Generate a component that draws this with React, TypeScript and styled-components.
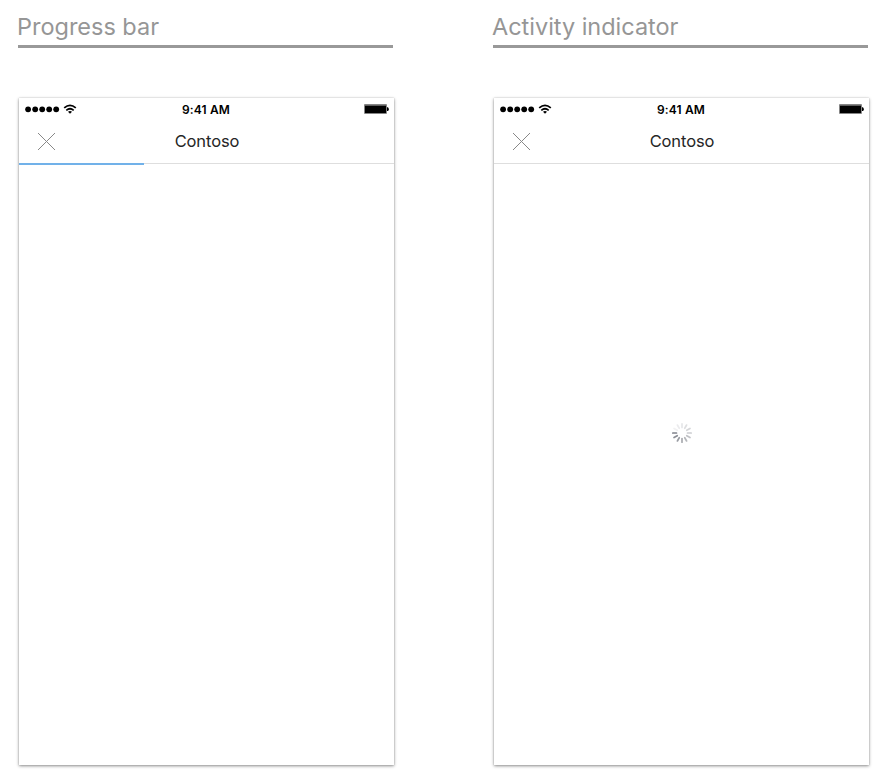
import React from "react";
import styled, { createGlobalStyle } from "styled-components";

const GlobalStyle = createGlobalStyle`
  * { box-sizing: border-box; }
  html, body { margin: 0; background: #fff; overflow: hidden; }
  body { font-family: Inter, "Liberation Sans", sans-serif; }
`;

const Page = styled.main`
  display: flex;
  gap: 100px;
  height: 778px;
  padding-left: 18px;
`;

const Example = styled.section`
  flex: none;
  width: 375px;
`;

const Heading = styled.h2`
  height: 48px;
  margin: 0;
  padding-top: 12px;
  border-bottom: 3px solid #999;
  color: #969696;
  font-size: 23.5px;
  font-weight: 400;
  line-height: 30px;
  letter-spacing: -0.02px;
  text-indent: -1px;
  white-space: nowrap;
`;

const Phone = styled.div`
  display: flex;
  flex-direction: column;
  width: 375px;
  height: 667px;
  margin: 50px 0 0 1px;
  background: #fff;
  box-shadow: 0 1px 3px rgba(0, 0, 0, 0.45), 0 0 1px rgba(0, 0, 0, 0.2);
`;

const StatusBar = styled.div`
  display: grid;
  grid-template-columns: 1fr auto 1fr;
  align-items: center;
  height: 22px;
  padding: 0 5px 0 6px;
`;

const Signal = styled.svg`
  display: block;
  width: 54px;
  height: 12px;
`;

const Time = styled.span`
  color: #000;
  font-size: 12px;
  font-weight: 600;
  line-height: 22px;
  letter-spacing: 0.15px;
  padding: 1px 2px 0 0;
`;

const Battery = styled.svg`
  display: block;
  justify-self: end;
  width: 25px;
  height: 12px;
`;

const NavBar = styled.header`
  display: grid;
  grid-template-columns: 1fr auto 1fr;
  align-items: center;
  height: 43px;
  padding: 0 18px;
`;

const CloseButton = styled.button`
  width: 19px;
  height: 19px;
  padding: 0;
  border: 0;
  background: none;

  svg { display: block; }
`;

const Title = styled.span`
  padding: 0 0 2px 1px;
  color: #262626;
  font-size: 16.5px;
  line-height: 22px;
  letter-spacing: -0.1px;
`;

const Track = styled.div`
  flex: none;
  height: 2px;
  border-top: 1px solid #dedede;
`;

const Progress = styled.div`
  width: 125px;
  height: 2px;
  margin-top: -1px;
  background: #71b1e9;
`;

const Content = styled.div`
  display: flex;
  flex: 1;
  justify-content: center;
  padding-top: 257px;
`;

const SPOKES = [
  "#e6e7e9", "#dedfe1", "#d5d6d8", "#cbccd0", "#c0c1c5", "#b4b6ba",
  "#a8aaaf", "#999ca3", "#8b8e96", "#7f828b", "#f1f1f2", "#ebebed",
];

function Spinner() {
  return (
    <svg width="22" height="22" viewBox="-11 -11 22 22">
      {SPOKES.map((color, i) => (
        <line
          key={i}
          x1="0"
          y1="-5.5"
          x2="0"
          y2="-9.2"
          stroke={color}
          strokeWidth="1.7"
          strokeLinecap="round"
          transform={`rotate(${i * 30})`}
        />
      ))}
    </svg>
  );
}

type DeviceProps = { progress?: boolean; children?: React.ReactNode };

function Device({ progress, children }: DeviceProps) {
  return (
    <Phone>
      <StatusBar>
        <Signal viewBox="0 0 54 12">
          {[3.1, 10.2, 17.2, 24.2, 31.2].map((x) => (
            <circle key={x} cx={x} cy="5.3" r="2.9" />
          ))}
          <g fill="none" stroke="#000" strokeWidth="1.7">
            <path d="M39.2 3.9Q45 -1.3 50.8 3.9" />
            <path d="M41.3 6.3Q45 3.2 48.7 6.3" />
          </g>
          <path d="M43 7.8Q45 6.3 47 7.8L45 9.8Z" />
        </Signal>
        <Time>9:41 AM</Time>
        <Battery viewBox="0 0 25 12">
          <rect width="23" height="10" rx="1" fill="#858585" />
          <rect x="1" y="1.7" width="21" height="7.3" />
          <path d="M23 3.3h.8q1 .4 1 1.9t-1 1.9H23z" />
        </Battery>
      </StatusBar>
      <NavBar>
        <CloseButton aria-label="Close">
          <svg width="19" height="19" viewBox="0 0 19 19" fill="none" stroke="#888">
            <path d="M1 1L18 18M18 1L1 18" />
          </svg>
        </CloseButton>
        <Title>Contoso</Title>
      </NavBar>
      <Track>{progress && <Progress />}</Track>
      <Content>{children}</Content>
    </Phone>
  );
}

export default function App() {
  return (
    <>
      <GlobalStyle />
      <Page>
        <Example>
          <Heading>Progress bar</Heading>
          <Device progress />
        </Example>
        <Example>
          <Heading>Activity indicator</Heading>
          <Device><Spinner /></Device>
        </Example>
      </Page>
    </>
  );
}
